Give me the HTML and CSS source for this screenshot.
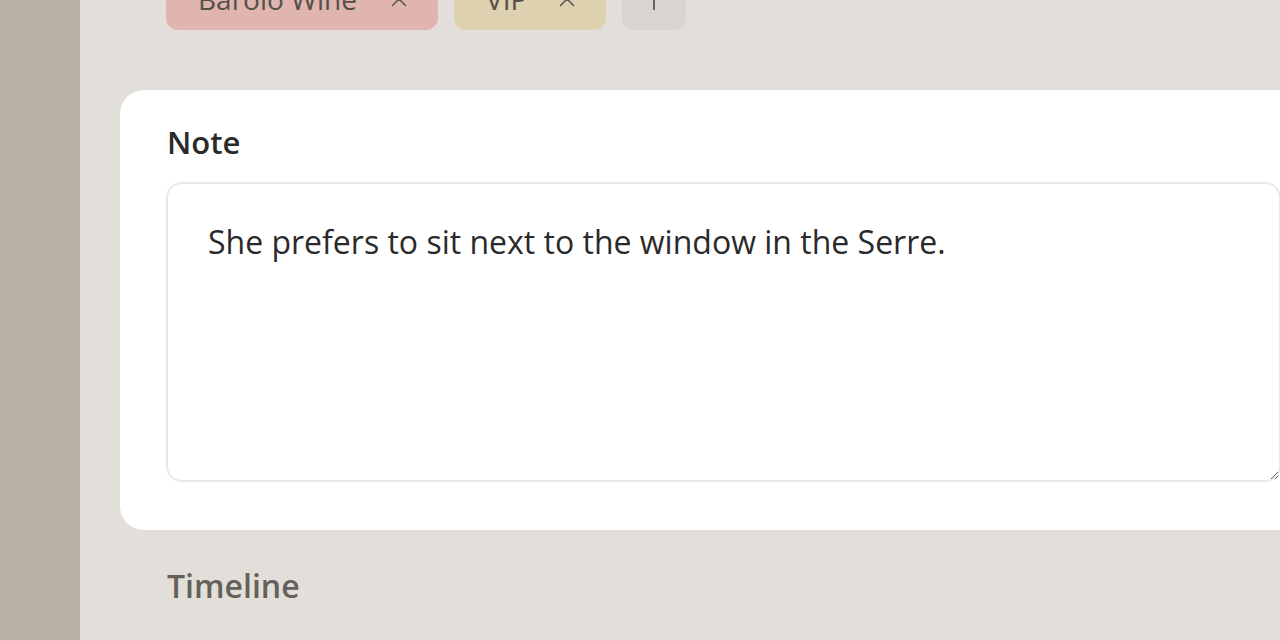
FILE: index.html
```html
<!DOCTYPE html>
<html lang="en">
<head>
<meta charset="utf-8">
<title>Guest note</title>
<link rel="stylesheet" href="styles.css">
</head>
<body>
<div class="app">
  <aside class="sidebar"></aside>
  <main class="main">
    <div class="tags">
      <span class="tag tag-pink"><span class="tag-label">Barolo Wine</span>
        <svg class="x" viewBox="0 0 16 16" aria-hidden="true"><path d="M1 1L15 15M15 1L1 15"/></svg>
      </span>
      <span class="tag tag-yellow"><span class="tag-label">VIP</span>
        <svg class="x" viewBox="0 0 16 16" aria-hidden="true"><path d="M1 1L15 15M15 1L1 15"/></svg>
      </span>
      <span class="tag tag-add">
        <svg class="plus" viewBox="0 0 22 22" aria-hidden="true"><path d="M11 0V22M0 11H22"/></svg>
      </span>
    </div>
    <section class="card">
      <h2 class="card-title">Note</h2>
      <textarea class="note">She prefers to sit next to the window in the Serre.</textarea>
    </section>
    <h2 class="section-title">Timeline</h2>
  </main>
</div>
</body>
</html>
```
FILE: styles.css
```css
html, body {
  margin: 0;
  padding: 0;
  overflow: hidden;
  background: #e2dfda;
}
.app {
  display: flex;
  width: 1280px;
  height: 640px;
  font-family: "Open Sans", "Noto Sans", sans-serif;
}
.sidebar {
  width: 80px;
  flex: none;
  background: #b8b0a5;
}
.main {
  flex: 1;
  min-width: 0;
  overflow: hidden;
  padding-left: 40px;
  background: #e2dfda;
}
.tags {
  display: flex;
  gap: 16px;
  margin-top: -32px;
  margin-left: 46px;
  height: 62px;
}
.tag {
  display: flex;
  align-items: center;
  justify-content: space-between;
  height: 62px;
  box-sizing: border-box;
  border-radius: 12px;
  padding: 0 31px 0 32px;
  font-size: 28px;
  color: #555049;
  white-space: nowrap;
}
.tag .x {
  flex: none;
  width: 16px;
  height: 16px;
  fill: none;
  stroke: #5f5a54;
  stroke-width: 1.6;
}
.tag .plus {
  width: 22px;
  height: 22px;
  fill: none;
  stroke: #5f5a54;
  stroke-width: 1.8;
}
.tag-pink { background: #e0b5b0; width: 272px; }
.tag-yellow { background: #ddd1af; width: 152px; }
.tag-add { background: #d8d5d0; width: 64px; justify-content: center; padding: 0; }
.card {
  margin-top: 60px;
  width: 1207px;
  box-sizing: border-box;
  background: #fff;
  border-radius: 24px;
  padding: 30px 46px 48px;
}
.card-title {
  margin: 0 0 18px 1px;
  font-size: 31px;
  line-height: 44px;
  font-weight: 600;
  color: #2a2a2a;
}
.note {
  display: block;
  width: 100%;
  height: 300px;
  box-sizing: border-box;
  border: 2px solid #e8e8e8;
  border-radius: 16px;
  padding: 36px 40px;
  font-family: "Open Sans", "Noto Sans", sans-serif;
  font-size: 32px;
  line-height: 44px;
  color: #2a2a2a;
  outline: none;
  resize: vertical;
}
.section-title {
  margin: 34px 0 0 47px;
  font-size: 32px;
  line-height: 44px;
  font-weight: 600;
  color: #65605a;
}
```
